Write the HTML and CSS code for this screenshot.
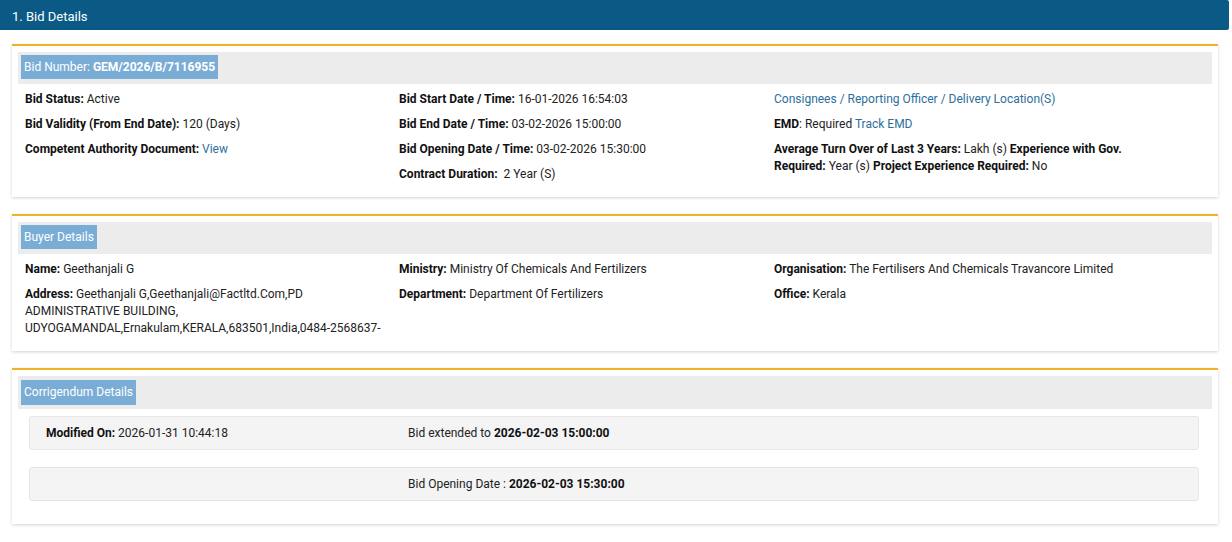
FILE: index.html
```html
<!DOCTYPE html>
<html>
<head>
	<title>Bid Details</title>
	<link rel="stylesheet" href="styles.css">
</head>
<body>

	<div class="page-title">1. Bid Details</div>

	<div class="card">
		<div class="card-head">
			<span class="card-label">Bid Number: <b>GEM/2026/B/7116955</b></span>
		</div>
		<div class="card-body">
			<div class="col">
				<div class="item"><b>Bid Status:</b> Active</div>
				<div class="item"><b>Bid Validity (From End Date):</b> 120 (Days)</div>
				<div class="item"><b>Competent Authority Document:</b> <a href="#">View</a></div>
			</div>
			<div class="col">
				<div class="item"><b>Bid Start Date / Time:</b> 16-01-2026 16:54:03</div>
				<div class="item"><b>Bid End Date / Time:</b> 03-02-2026 15:00:00</div>
				<div class="item"><b>Bid Opening Date / Time:</b> 03-02-2026 15:30:00</div>
				<div class="item"><b>Contract Duration:</b>&nbsp; 2 Year (S)</div>
			</div>
			<div class="col">
				<div class="item"><a href="#">Consignees / Reporting Officer / Delivery Location(S)</a></div>
				<div class="item"><b>EMD</b>: Required <a href="#">Track EMD</a></div>
				<div class="item item-wrap"><b>Average Turn Over of Last 3 Years:</b> Lakh (s) <b>Experience with Gov. Required:</b> Year (s) <b>Project Experience Required:</b> No</div>
			</div>
		</div>
	</div>

	<div class="card">
		<div class="card-head">
			<span class="card-label">Buyer Details</span>
		</div>
		<div class="card-body">
			<div class="col">
				<div class="item"><b>Name:</b> Geethanjali G</div>
				<div class="item item-wrap"><b>Address:</b> Geethanjali G,Geethanjali@Factltd.Com,PD ADMINISTRATIVE BUILDING, UDYOGAMANDAL,Ernakulam,KERALA,683501,India,0484-2568637-</div>
			</div>
			<div class="col">
				<div class="item"><b>Ministry:</b> Ministry Of Chemicals And Fertilizers</div>
				<div class="item"><b>Department:</b> Department Of Fertilizers</div>
			</div>
			<div class="col">
				<div class="item"><b>Organisation:</b> The Fertilisers And Chemicals Travancore Limited</div>
				<div class="item"><b>Office:</b> Kerala</div>
			</div>
		</div>
	</div>

	<div class="card">
		<div class="card-head card-head-tall">
			<span class="card-label">Corrigendum Details</span>
		</div>
		<div class="corr-list">
			<div class="corr-row">
				<div><b>Modified On:</b> 2026-01-31 10:44:18</div>
				<div>Bid extended to <b>2026-02-03 15:00:00</b></div>
			</div>
			<div class="corr-row">
				<div></div>
				<div>Bid Opening Date : <b>2026-02-03 15:30:00</b></div>
			</div>
		</div>
	</div>

</body>
</html>
```

FILE: styles.css
```css
body {
	margin: 0;
	padding: 0;
	background: #fff;
	font-family: Roboto, "Liberation Sans", sans-serif;
	font-size: 12px;
	color: #222;
}

a {
	color: #2c6f9c;
	text-decoration: none;
}

b {
	font-weight: 700;
	color: #111;
}

.page-title {
	height: 30px;
	line-height: 33px;
	margin-right: 3px;
	padding-left: 12px;
	background: #0b5a86;
	border-radius: 0 2px 2px 0;
	color: #fff;
	font-size: 13px;
}

.card {
	width: 1206px;
	margin: 14px 0 17px 12px;
	padding: 6px 6px 6px 6px;
	box-sizing: border-box;
	background: #fff;
	border-top: 2px solid #f0b323;
	box-shadow: 0 1px 3px rgba(0, 0, 0, 0.18);
}

.card + .card {
	margin-top: 0;
}

.card-head {
	height: 32px;
	padding: 3px 0 0 3px;
	box-sizing: border-box;
	background: #ececec;
}

.card-head-tall {
	height: 33px;
	padding-top: 4px;
}

.card-label {
	display: inline-block;
	height: 24px;
	line-height: 25px;
	padding: 0 3px;
	background: #7aadd6;
	color: #fff;
}

.card-head-tall .card-label {
	height: 25px;
}

.card-label b {
	color: #fff;
}

.card-body {
	display: grid;
	grid-template-columns: 374px 375px 1fr;
	padding: 7px 0 0 7px;
}

.item {
	line-height: 17px;
	margin-bottom: 8px;
	white-space: nowrap;
}

.item-wrap {
	white-space: normal;
	padding-right: 14px;
}

.col:first-child .item-wrap {
	padding-right: 0;
	width: 360px;
}

.col:last-child .item-wrap {
	width: 360px;
}

.corr-list {
	padding: 7px 13px 0 11px;
}

.corr-row {
	display: grid;
	grid-template-columns: 362px 1fr;
	height: 34px;
	margin-bottom: 17px;
	padding-left: 16px;
	box-sizing: border-box;
	align-items: center;
	background: #f4f4f4;
	border: 1px solid #e6e6e6;
	border-radius: 3px;
}

.corr-row:last-child {
	margin-bottom: 17px;
}
```
